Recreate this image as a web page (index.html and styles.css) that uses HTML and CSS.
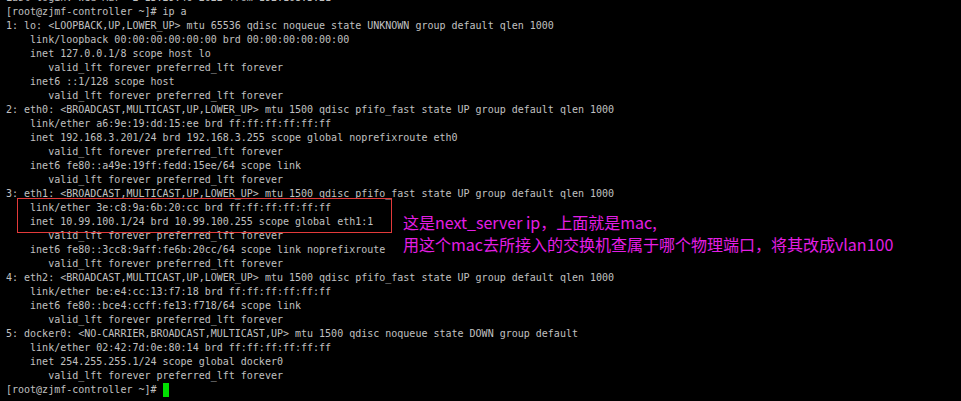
FILE: index.html
```html
<!DOCTYPE html>
<html>
<head>
<meta charset="utf-8">
<link rel="stylesheet" href="styles.css">
</head>
<body>
<div class="term">
<pre class="out">Last login: Wed Mar  2 13:29:46 2022 from 192.168.3.21
[root@zjmf-controller ~]# ip a
1: lo: &lt;LOOPBACK,UP,LOWER_UP&gt; mtu 65536 qdisc noqueue state UNKNOWN group default qlen 1000
    link/loopback 00:00:00:00:00:00 brd 00:00:00:00:00:00
    inet 127.0.0.1/8 scope host lo
       valid_lft forever preferred_lft forever
    inet6 ::1/128 scope host
       valid_lft forever preferred_lft forever
2: eth0: &lt;BROADCAST,MULTICAST,UP,LOWER_UP&gt; mtu 1500 qdisc pfifo_fast state UP group default qlen 1000
    link/ether a6:9e:19:dd:15:ee brd ff:ff:ff:ff:ff:ff
    inet 192.168.3.201/24 brd 192.168.3.255 scope global noprefixroute eth0
       valid_lft forever preferred_lft forever
    inet6 fe80::a49e:19ff:fedd:15ee/64 scope link
       valid_lft forever preferred_lft forever
3: eth1: &lt;BROADCAST,MULTICAST,UP,LOWER_UP&gt; mtu 1500 qdisc pfifo_fast state UP group default qlen 1000
    link/ether 3e:c8:9a:6b:20:cc brd ff:ff:ff:ff:ff:ff
    inet 10.99.100.1/24 brd 10.99.100.255 scope global eth1:1
       valid_lft forever preferred_lft forever
    inet6 fe80::3cc8:9aff:fe6b:20cc/64 scope link noprefixroute
       valid_lft forever preferred_lft forever
4: eth2: &lt;BROADCAST,MULTICAST,UP,LOWER_UP&gt; mtu 1500 qdisc pfifo_fast state UP group default qlen 1000
    link/ether be:e4:cc:13:f7:18 brd ff:ff:ff:ff:ff:ff
    inet6 fe80::bce4:ccff:fe13:f718/64 scope link
       valid_lft forever preferred_lft forever
5: docker0: &lt;NO-CARRIER,BROADCAST,MULTICAST,UP&gt; mtu 1500 qdisc noqueue state DOWN group default
    link/ether 02:42:7d:0e:80:14 brd ff:ff:ff:ff:ff:ff
    inet 254.255.255.1/24 scope global docker0
       valid_lft forever preferred_lft forever
[root@zjmf-controller ~]# <span class="cursor"></span></pre>
<div class="mark-box"></div>
<div class="note">
<div class="note-line">这是next_server ip，上面就是mac,</div>
<div class="note-line">用这个mac去所接入的交换机查属于哪个物理端口，将其改成vlan100</div>
</div>
</div>
</body>
</html>
```
FILE: styles.css
```css
html, body {
  margin: 0;
  padding: 0;
  background: #000;
}
body {
  width: 961px;
  height: 401px;
  overflow: hidden;
}
.term {
  position: relative;
  width: 961px;
  height: 401px;
  overflow: hidden;
  background: #000;
}
.out {
  margin: -9px 0 0 0;
  padding: 0 0 0 6px;
  font-family: "DejaVu Sans Mono", "Liberation Mono", monospace;
  font-size: 10px;
  line-height: 14px;
  color: #c0c0c0;
  white-space: pre;
}
.cursor {
  display: inline-block;
  width: 6px;
  height: 14px;
  background: #00e000;
  vertical-align: top;
}
.mark-box {
  position: absolute;
  left: 17px;
  top: 198px;
  width: 373px;
  height: 33px;
  border: 1px solid #e23a3a;
}
.note {
  position: absolute;
  left: 403px;
  top: 211px;
  font-family: "Noto Sans CJK SC", "Microsoft YaHei", sans-serif;
  font-size: 16px;
  line-height: 22px;
  color: #e41ee4;
}
.note-line {
  white-space: nowrap;
}
```
